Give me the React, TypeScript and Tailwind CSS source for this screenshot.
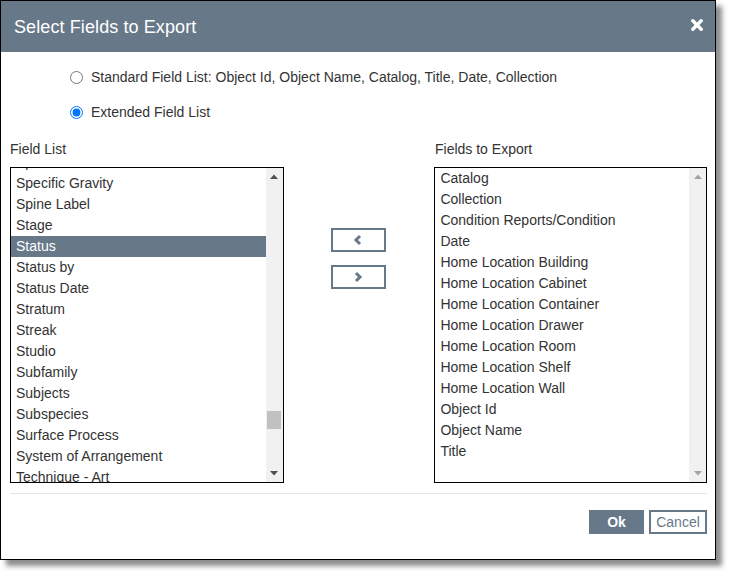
import React from "react";

const leftItems = [
  "Specimen Count",
  "Specific Gravity",
  "Spine Label",
  "Stage",
  "Status",
  "Status by",
  "Status Date",
  "Stratum",
  "Streak",
  "Studio",
  "Subfamily",
  "Subjects",
  "Subspecies",
  "Surface Process",
  "System of Arrangement",
  "Technique - Art",
  "Technique - Medium",
];

const rightItems = [
  "Catalog",
  "Collection",
  "Condition Reports/Condition",
  "Date",
  "Home Location Building",
  "Home Location Cabinet",
  "Home Location Container",
  "Home Location Drawer",
  "Home Location Room",
  "Home Location Shelf",
  "Home Location Wall",
  "Object Id",
  "Object Name",
  "Title",
];

function ScrollBar({ disabled, thumb }: { disabled?: boolean; thumb?: boolean }) {
  const arrow = disabled ? "#a3a3a3" : "#505050";
  return (
    <div className="w-[17px] h-full bg-[#f1f1f1] flex flex-col justify-between items-center">
      <div className="h-[17px] w-full flex items-center justify-center">
        <svg width="8" height="5" viewBox="0 0 8 5">
          <path d="M0 5 L4 0.5 L8 5 Z" fill={arrow} />
        </svg>
      </div>
      <div className="flex-1 w-full relative">
        {thumb && <div className="absolute left-[1px] right-[2px] top-[226px] h-[18px] bg-[#c1c1c1]" />}
      </div>
      <div className="h-[17px] w-full flex items-center justify-center">
        <svg width="8" height="5" viewBox="0 0 8 5">
          <path d="M0 0 L8 0 L4 4.5 Z" fill={arrow} />
        </svg>
      </div>
    </div>
  );
}

export default function App() {
  return (
    <div className="w-[732px] h-[576px] bg-white" style={{ fontFamily: '"Liberation Sans", Arial, sans-serif' }}>
      <div className="w-[716px] h-[560px] border border-black bg-white flex flex-col shadow-[6px_6px_5px_rgba(0,0,0,0.45)]">
        {/* Header */}
        <div className="h-[51px] bg-[#677889] flex items-center justify-between pl-[13px] pr-[12px] shrink-0">
          <div className="text-white text-[18px] leading-none tracking-[0.1px]">Select Fields to Export</div>
          <svg width="12" height="12" viewBox="0 0 12 12" className="mt-[-4px]">
            <path d="M1.8 1.8 L10.2 10.2 M10.2 1.8 L1.8 10.2" stroke="white" strokeWidth="3.4" strokeLinecap="round" />
          </svg>
        </div>

        {/* Body */}
        <div className="flex flex-col pl-[9px] pr-[8px] text-[14px] text-[#333]">
          <div className="mt-[15px] h-[20px] flex items-center pl-[60px]">
            <input type="radio" name="fl" readOnly className="w-[13px] h-[13px] m-0" />
            <span className="ml-[8px]">Standard Field List: Object Id, Object Name, Catalog, Title, Date, Collection</span>
          </div>
          <div className="mt-[15px] h-[20px] flex items-center pl-[60px]">
            <input type="radio" name="fl" readOnly checked className="w-[13px] h-[13px] m-0" />
            <span className="ml-[8px]">Extended Field List</span>
          </div>

          <div className="mt-[18px] h-[18px] flex items-center">
            <div className="w-[274px]">Field List</div>
            <div className="w-[151px]" />
            <div>Fields to Export</div>
          </div>

          <div className="mt-[9px] flex h-[316px]">
            {/* Left list */}
            <div className="w-[274px] h-full border border-black flex">
              <div className="flex-1 overflow-hidden">
                <div className="mt-[-16px]">
                  {leftItems.map((t) => (
                    <div
                      key={t}
                      className={
                        "h-[21px] leading-[21px] pl-[5px] whitespace-nowrap " +
                        (t === "Status" ? "bg-[#677889] text-white" : "")
                      }
                    >
                      {t}
                    </div>
                  ))}
                </div>
              </div>
              <ScrollBar thumb />
            </div>

            {/* Middle buttons */}
            <div className="w-[151px] flex flex-col items-start pl-[47px] pt-[61px] gap-[13px]">
              <div className="w-[55px] h-[24px] border-2 border-[#677889] flex items-center justify-center">
                <svg width="10" height="12" viewBox="0 0 10 12">
                  <path d="M7 2 L3 6 L7 10" stroke="#677889" strokeWidth="3" fill="none" />
                </svg>
              </div>
              <div className="w-[55px] h-[24px] border-2 border-[#677889] flex items-center justify-center">
                <svg width="10" height="12" viewBox="0 0 10 12">
                  <path d="M3 2 L7 6 L3 10" stroke="#677889" strokeWidth="3" fill="none" />
                </svg>
              </div>
            </div>

            {/* Right list */}
            <div className="w-[273px] h-full border border-black flex">
              <div className="flex-1 overflow-hidden">
                {rightItems.map((t) => (
                  <div key={t} className="h-[21px] leading-[21px] pl-[5px] whitespace-nowrap">
                    {t}
                  </div>
                ))}
              </div>
              <ScrollBar disabled />
            </div>
          </div>

          <div className="mt-[10px] border-t border-[#e5e5e5]" />

          <div className="mt-[16px] flex justify-end gap-[5px]">
            <div className="w-[55px] h-[24px] bg-[#677889] text-white font-bold flex items-center justify-center">Ok</div>
            <div className="w-[58px] h-[24px] border-2 border-[#677889] text-[#677889] flex items-center justify-center">Cancel</div>
          </div>
        </div>
      </div>
    </div>
  );
}
